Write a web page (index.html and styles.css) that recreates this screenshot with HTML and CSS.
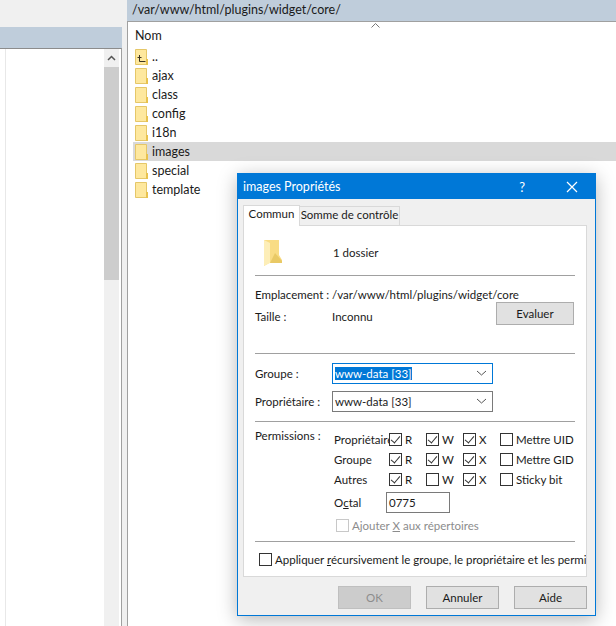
FILE: index.html
```html
<!DOCTYPE html>
<html lang="en">
<head>
    <meta charset="UTF-8">
    <meta name="viewport" content="width=device-width, initial-scale=1.0">
    <title>images Propriétés</title>
    <link rel="stylesheet" href="styles.css">
</head>
<body>

<div class="panes">
    <!-- Local tree -->
    <div class="left-pane">
        <div class="pane-bar"></div>
        <div class="left-list">
            <div class="tree-col"></div>
            <div class="scrollbar">
                <div class="scroll-up">
                    <svg width="9" height="6" viewBox="0 0 9 6"><path d="M1 5 L4.5 1.5 L8 5" fill="none" stroke="#555" stroke-width="1.5"/></svg>
                </div>
                <div class="scroll-thumb"></div>
            </div>
        </div>
    </div>

    <!-- Remote files -->
    <div class="right-pane">
        <div class="path-bar">/var/www/html/plugins/widget/core/</div>
        <div class="file-list">
            <div class="list-head">
                Nom
                <svg class="sort-caret" width="9" height="5" viewBox="0 0 9 5"><path d="M0.5 4.5 L4.5 0.5 L8.5 4.5" fill="none" stroke="#777"/></svg>
            </div>
            <div class="file-row">
                <svg class="file-icon" width="13" height="16" viewBox="0 0 13 16"><path class="folder-back" d="M0.5 0.5 H11.5 V15.5 H0.5 Z"/><path class="folder-tab" d="M11 10 H13 V16 H11 Z"/><path d="M4.5 6 V12.5 H10.5 M2.5 8.5 H6.5" fill="none" stroke="#3b3320"/></svg>
                <span>..</span>
            </div>
            <div class="file-row">
                <svg class="file-icon" width="13" height="16" viewBox="0 0 13 16"><path class="folder-back" d="M0.5 0.5 H11.5 V15.5 H0.5 Z"/><path class="folder-tab" d="M11 10 H13 V16 H11 Z"/></svg>
                <span>ajax</span>
            </div>
            <div class="file-row">
                <svg class="file-icon" width="13" height="16" viewBox="0 0 13 16"><path class="folder-back" d="M0.5 0.5 H11.5 V15.5 H0.5 Z"/><path class="folder-tab" d="M11 10 H13 V16 H11 Z"/></svg>
                <span>class</span>
            </div>
            <div class="file-row">
                <svg class="file-icon" width="13" height="16" viewBox="0 0 13 16"><path class="folder-back" d="M0.5 0.5 H11.5 V15.5 H0.5 Z"/><path class="folder-tab" d="M11 10 H13 V16 H11 Z"/></svg>
                <span>config</span>
            </div>
            <div class="file-row">
                <svg class="file-icon" width="13" height="16" viewBox="0 0 13 16"><path class="folder-back" d="M0.5 0.5 H11.5 V15.5 H0.5 Z"/><path class="folder-tab" d="M11 10 H13 V16 H11 Z"/></svg>
                <span>i18n</span>
            </div>
            <div class="file-row selected">
                <svg class="file-icon" width="13" height="16" viewBox="0 0 13 16"><path class="folder-back" d="M0.5 0.5 H11.5 V15.5 H0.5 Z"/><path class="folder-tab" d="M11 10 H13 V16 H11 Z"/></svg>
                <span>images</span>
            </div>
            <div class="file-row">
                <svg class="file-icon" width="13" height="16" viewBox="0 0 13 16"><path class="folder-back" d="M0.5 0.5 H11.5 V15.5 H0.5 Z"/><path class="folder-tab" d="M11 10 H13 V16 H11 Z"/></svg>
                <span>special</span>
            </div>
            <div class="file-row">
                <svg class="file-icon" width="13" height="16" viewBox="0 0 13 16"><path class="folder-back" d="M0.5 0.5 H11.5 V15.5 H0.5 Z"/><path class="folder-tab" d="M11 10 H13 V16 H11 Z"/></svg>
                <span>template</span>
            </div>
        </div>
    </div>
</div>

<!-- Properties dialog -->
<div class="dialog">
    <div class="title-bar">
        <span class="title-text">images Propriétés</span>
        <span class="title-help">?</span>
        <svg class="title-close" width="12" height="12" viewBox="0 0 12 12"><path d="M1 1 L11 11 M11 1 L1 11" stroke="#fff" stroke-width="1.2"/></svg>
    </div>

    <div class="tabs">
        <div class="tab active">Commun</div>
        <div class="tab">Somme de contrôle</div>
    </div>

    <div class="tab-panel">
        <div class="summary">
            <svg width="20" height="28" viewBox="0 0 20 28"><path d="M1 1 H16 V24 H1 Z" fill="#fbe39a"/><path d="M1 1 H6 L16 1 V16 L19 21 V24 H6 L1 27 Z" fill="#f9dc84"/><path d="M1 1 L7 4 V24 L1 27 Z" fill="#fdeeb8"/><path d="M7 24 L12 14 L19 22 V24 Z" fill="#e9c965"/></svg>
            <span>1 dossier</span>
        </div>
        <div class="separator"></div>

        <div class="info-block">
            <div class="info-row"><label>Emplacement :</label><span>/var/www/html/plugins/widget/core</span></div>
            <div class="info-row size-row">
                <label>Taille :</label><span>Inconnu</span>
                <button class="btn eval-btn" type="button">Evaluer</button>
            </div>
        </div>
        <div class="separator"></div>

        <div class="owner-block">
            <div class="info-row">
                <label>Groupe :</label>
                <div class="combo focused">
                    <span class="selected-text">www-data [33]</span>
                    <svg width="11" height="6" viewBox="0 0 11 6"><path d="M1 1 L5.5 5 L10 1" fill="none" stroke="#555"/></svg>
                </div>
            </div>
            <div class="info-row">
                <label>Propriétaire :</label>
                <div class="combo">
                    <span>www-data [33]</span>
                    <svg width="11" height="6" viewBox="0 0 11 6"><path d="M1 1 L5.5 5 L10 1" fill="none" stroke="#555"/></svg>
                </div>
            </div>
        </div>
        <div class="separator"></div>

        <div class="perm-block">
            <label class="perm-title">Permissions :</label>
            <div class="perm-content">
                <div class="perm-grid">
                    <span>Propriétaire</span>
                    <div class="check on"><i></i>R</div>
                    <div class="check on"><i></i>W</div>
                    <div class="check on"><i></i>X</div>
                    <div class="check"><i></i>Mettre UID</div>

                    <span>Groupe</span>
                    <div class="check on"><i></i>R</div>
                    <div class="check on"><i></i>W</div>
                    <div class="check on"><i></i>X</div>
                    <div class="check"><i></i>Mettre GID</div>

                    <span>Autres</span>
                    <div class="check on"><i></i>R</div>
                    <div class="check"><i></i>W</div>
                    <div class="check on"><i></i>X</div>
                    <div class="check"><i></i>Sticky bit</div>
                </div>
                <div class="octal-row">
                    <span>O<u>c</u>tal</span>
                    <div class="octal-input">0775</div>
                </div>
                <div class="check disabled"><i></i><span>Ajouter <u>X</u> aux répertoires</span></div>
            </div>
        </div>
        <div class="separator"></div>

        <div class="recursive-row">
            <div class="check"><i></i><span>Appliquer <u>r</u>écursivement le groupe, le propriétaire et les permis</span></div>
        </div>
    </div>

    <div class="dialog-buttons">
        <button class="btn disabled" type="button">OK</button>
        <button class="btn" type="button">Annuler</button>
        <button class="btn" type="button">Aide</button>
    </div>
</div>

</body>
</html>
```

FILE: styles.css
```css
* {
    box-sizing: border-box;
}
html, body {
    height: 100%;
}
body {
    margin: 0;
    overflow: hidden;
    background-color: #f0f0f0;
    font-family: Lato, "Open Sans", sans-serif;
    font-size: 11.5px;
    color: #1a1a1a;
}
.panes {
    display: flex;
    gap: 5px;
    height: 626px;
}

/* Left pane */
.left-pane {
    width: 122px;
    padding-top: 27px;
    display: flex;
    flex-direction: column;
}
.pane-bar {
    height: 21px;
    background-color: #bfcddb;
}
.left-list {
    flex: 1;
    display: flex;
    justify-content: space-between;
    background-color: #fff;
    border-top: 1px solid #8c8c8c;
    border-right: 1px solid #a0a0a0;
    padding-right: 2px;
}
.tree-col {
    width: 6px;
    border-right: 1px solid #e8e8e8;
}
.scrollbar {
    width: 15px;
    display: flex;
    flex-direction: column;
    background-color: #f0f0f0;
}
.scroll-up {
    height: 18px;
    display: flex;
    align-items: center;
    justify-content: center;
}
.scroll-thumb {
    height: 213px;
    background-color: #cdcdcd;
}

/* Right pane */
.right-pane {
    flex: 1;
    display: flex;
    flex-direction: column;
}
.path-bar {
    height: 21px;
    padding: 2px 0 0 5px;
    background-color: #bfcddb;
    font-size: 12.5px;
    white-space: nowrap;
}
.file-list {
    flex: 1;
    background-color: #fff;
    border-left: 1px solid #a0a0a0;
    border-top: 1px solid #a0a0a0;
    padding-left: 5px;
}
.list-head {
    position: relative;
    height: 25px;
    padding: 6px 0 0 2px;
    font-size: 12.5px;
}
.sort-caret {
    position: absolute;
    left: 238px;
    top: 1px;
}
.file-row {
    display: flex;
    align-items: center;
    gap: 4px;
    height: 19px;
    padding-left: 2px;
    font-size: 12.5px;
}
.file-row.selected {
    background-color: #d9d9d9;
}
.file-icon {
    flex: none;
}
.folder-back {
    fill: #fee89e;
    stroke: #e5c768;
}
.folder-tab {
    fill: #e8c24d;
}

/* Dialog */
.dialog {
    position: absolute;
    left: 237px;
    top: 173px;
    width: 359px;
    height: 443px;
    display: flex;
    flex-direction: column;
    background-color: #f0f0f0;
    border: 1px solid #0078d7;
    box-shadow: 0 4px 18px rgba(0, 0, 0, 0.28);
    padding: 0 8px 0 5px;
}
.title-bar {
    display: flex;
    align-items: center;
    height: 25px;
    margin: 0 -8px 0 -5px;
    padding: 0 17px 0 5px;
    background-color: #0078d7;
    color: #fff;
    font-size: 12.5px;
}
.title-text {
    flex: 1;
}
.title-help {
    margin-right: 41px;
    font-size: 13px;
}
.tabs {
    display: flex;
    align-items: flex-end;
    height: 26px;
}
.tab {
    height: 19px;
    width: 100px;
    padding: 1px 0 0;
    text-align: center;
    background-color: #f0f0f0;
    border: 1px solid #d9d9d9;
    border-bottom: none;
    border-left: none;
}
.tab.active {
    height: 21px;
    width: 57px;
    padding: 1px 0 0;
    background-color: #fff;
    border-left: 1px solid #d9d9d9;
    margin-bottom: -1px;
    position: relative;
}
.tab-panel {
    height: 352px;
    background-color: #fff;
    border: 1px solid #d9d9d9;
    padding: 0 11px;
    overflow: hidden;
}
.separator {
    width: 320px;
    height: 1px;
    background-color: #a0a0a0;
}
.summary {
    display: flex;
    align-items: center;
    gap: 50px;
    height: 49px;
    padding: 4px 0 0 8px;
}
.info-block {
    height: 77px;
    padding-top: 7px;
}
.info-row {
    display: flex;
    align-items: center;
    height: 22px;
    white-space: nowrap;
}
.info-row label {
    width: 77px;
    flex: none;
}
.size-row {
    position: relative;
}
.eval-btn {
    position: absolute;
    left: 241px;
    top: -3px;
}
.owner-block {
    height: 67px;
    padding-top: 8px;
    display: flex;
    flex-direction: column;
    gap: 6px;
}
.combo {
    width: 161px;
    height: 21px;
    display: flex;
    align-items: center;
    justify-content: space-between;
    padding: 0 5px 0 2px;
    border: 1px solid #7a7a7a;
    background-color: #fff;
}
.combo.focused {
    border-color: #0078d7;
}
.selected-text {
    background-color: #0078d7;
    color: #fff;
}
.perm-block {
    display: flex;
    height: 119px;
    padding-top: 7px;
}
.perm-title {
    width: 79px;
    flex: none;
}
.perm-grid {
    display: grid;
    grid-template-columns: 55px 37px 37px 37px auto;
    grid-auto-rows: 20px;
    align-items: center;
}
.check {
    display: flex;
    align-items: center;
    gap: 3px;
    white-space: nowrap;
}
.check i {
    position: relative;
    flex: none;
    width: 13px;
    height: 13px;
    border: 1px solid #333;
    background-color: #fff;
}
.check.on i::after {
    content: "";
    position: absolute;
    left: 3px;
    top: 0;
    width: 4px;
    height: 8px;
    border: solid #333;
    border-width: 0 1px 1px 0;
    transform: rotate(40deg);
}
.check.disabled {
    color: #8c8c8c;
    margin-left: 2px;
}
.check.disabled i {
    border-color: #c8c8c8;
}
.octal-row {
    display: flex;
    align-items: center;
    margin-top: 3px;
    height: 21px;
}
.octal-row span {
    width: 52px;
}
.octal-input {
    width: 64px;
    height: 21px;
    padding-left: 2px;
    border: 1px solid #7a7a7a;
    line-height: 19px;
}
.octal-row + .check {
    margin-top: 6px;
}
.recursive-row {
    padding: 11px 0 0 4px;
    width: 320px;
}
.dialog-buttons {
    display: flex;
    justify-content: flex-end;
    gap: 15px;
    margin-top: 9px;
}
.btn {
    width: 73px;
    height: 23px;
    padding: 0;
    font: inherit;
    color: #1a1a1a;
    background-color: #e1e1e1;
    border: 1px solid #adadad;
}
.btn.disabled {
    background-color: #cccccc;
    border-color: #bfbfbf;
    color: #8c8c8c;
}
.eval-btn {
    width: 78px;
}
```
